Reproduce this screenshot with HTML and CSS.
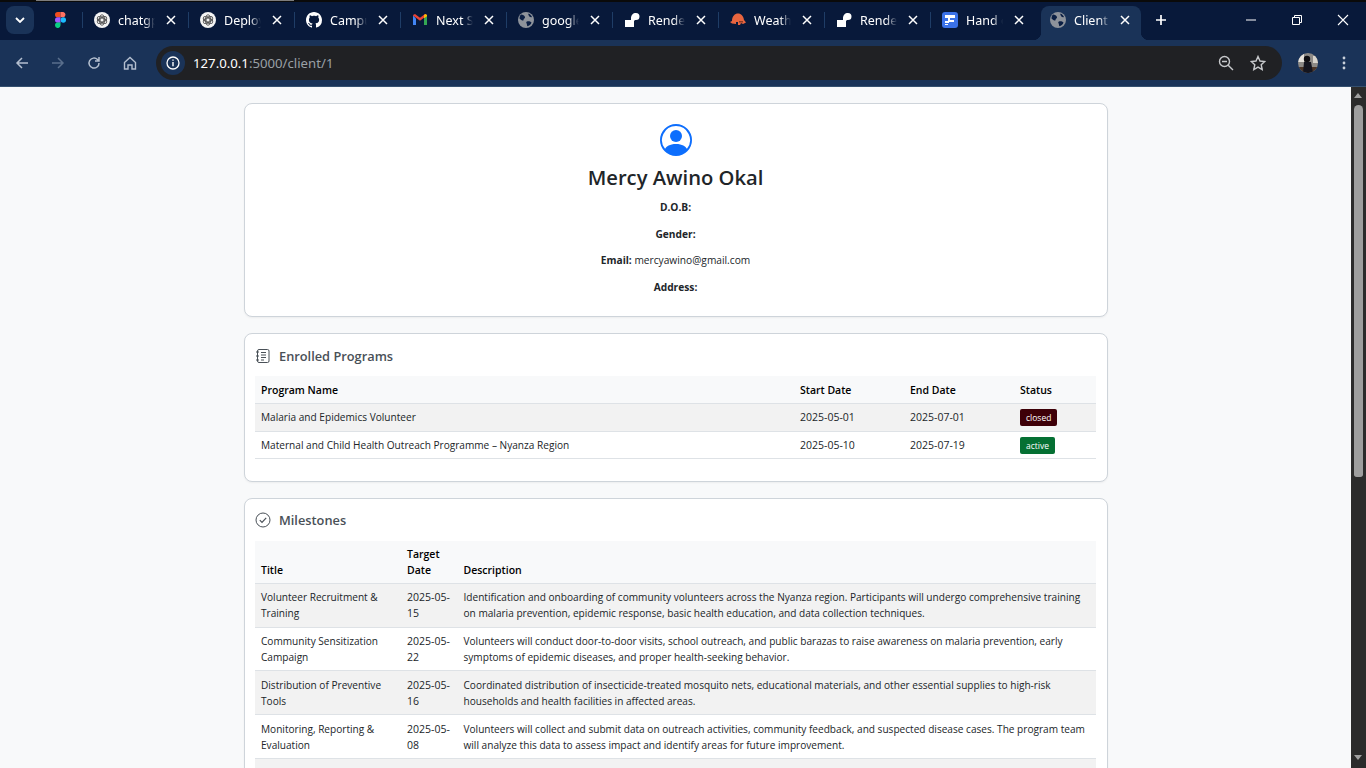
FILE: index.html
```html
<!DOCTYPE html>
<html lang="en">
<head>
    <meta charset="UTF-8">
    <meta name="viewport" content="width=device-width, initial-scale=1.0">
    <title>Client Profile</title>
    <link rel="stylesheet" href="styles.css">
</head>
<body>
    <svg class="sprites" width="0" height="0">
        <symbol id="i-close" viewBox="0 0 10 10"><path d="M1 1l8 8M9 1l-8 8" fill="none" stroke="currentColor" stroke-width="1.5"/></symbol>
        <symbol id="i-globe" viewBox="0 0 16 16"><circle cx="8" cy="8" r="8" fill="#8e939b"/><path d="M3 2.500c2 .3 3.500 1.200 4 2.500s-1.500 1.500-1.500 3S3 8 1.500 6.500C1.500 5 2 3.500 3 2.500zM9 9.500c1.500-.5 3.500 0 4.500 1-.6 2-2.500 3.500-4 3.800-.8-1-.3-2-1-3-.4-.7-.3-1.400.5-1.800zM10.500 1.500c1.500.5 3 2 3.500 3.500-1.500.5-2.500 0-3-1s-1-1.500-.5-2.500z" fill="#0b1f44"/></symbol>
        <symbol id="i-gpt" viewBox="0 0 16 16"><circle cx="8" cy="8" r="8" fill="#f4f4f4"/><g fill="none" stroke="#555" stroke-width=".9"><circle cx="8" cy="8" r="2"/><ellipse cx="8" cy="8" rx="5.200" ry="2.600" transform="rotate(30 8 8)"/><ellipse cx="8" cy="8" rx="5.200" ry="2.600" transform="rotate(90 8 8)"/><ellipse cx="8" cy="8" rx="5.200" ry="2.600" transform="rotate(150 8 8)"/></g></symbol>
        <symbol id="i-render" viewBox="0 0 16 16"><path d="M1 8h6V6.500C7 3 9 1 12 1a3.500 3.500 0 0 1 0 7c-1.500 0-2 .5-2 2v5H1z" fill="#fff"/></symbol>
    </svg>

    <div class="tabstrip">
        <div class="top-line"></div>
        <button class="tab-search">
            <svg width="10" height="6" viewBox="0 0 10 6"><path d="M1 1l4 4 4-4" fill="none" stroke="#fff" stroke-width="1.800"/></svg>
        </button>
        <div class="pinned">
            <svg width="11" height="16" viewBox="0 0 11 16">
                <path d="M0 2.700A2.700 2.700 0 0 1 2.700 0h2.800v5.300H2.700A2.700 2.700 0 0 1 0 2.700z" fill="#f24e1e"/>
                <path d="M5.500 0h2.800a2.700 2.700 0 0 1 0 5.300H5.500z" fill="#ff7262"/>
                <path d="M0 8a2.700 2.700 0 0 1 2.700-2.700h2.800v5.400H2.700A2.700 2.700 0 0 1 0 8z" fill="#a259ff"/>
                <circle cx="8.300" cy="8" r="2.700" fill="#1abcfe"/>
                <path d="M0 13.300a2.700 2.700 0 0 1 2.700-2.700h2.800v2.700a2.700 2.700 0 0 1-5.500 0z" fill="#0acf83"/>
            </svg>
        </div>
        <div class="tab">
            <svg class="favicon"><use href="#i-gpt"/></svg>
            <span class="tab-title">chatgpt</span>
            <svg class="tab-close"><use href="#i-close"/></svg>
        </div>
        <div class="tab">
            <svg class="favicon"><use href="#i-gpt"/></svg>
            <span class="tab-title">Deploy</span>
            <svg class="tab-close"><use href="#i-close"/></svg>
        </div>
        <div class="tab">
            <svg class="favicon" viewBox="0 0 16 16"><path fill="#fff" d="M8 0C3.580 0 0 3.580 0 8c0 3.540 2.290 6.530 5.470 7.590.4.070.55-.17.55-.38 0-.19-.01-.82-.01-1.490-2.010.37-2.530-.49-2.690-.94-.09-.23-.48-.94-.82-1.130-.28-.15-.68-.52-.01-.53.63-.01 1.080.58 1.230.82.720 1.210 1.870.870 2.330.660.070-.520.280-.870.510-1.070-1.780-.2-3.640-.890-3.640-3.950 0-.870.310-1.590.820-2.150-.080-.2-.360-1.020.080-2.120 0 0 .670-.210 2.200.820.640-.180 1.320-.270 2-.270s1.360.090 2 .270c1.530-1.040 2.200-.820 2.200-.820.440 1.100.160 1.920.080 2.120.510.560.820 1.270.820 2.150 0 3.070-1.870 3.750-3.650 3.950.290.250.540.730.540 1.480 0 1.070-.010 1.930-.010 2.200 0 .210.150.460.550.380A8.010 8.010 0 0 0 16 8c0-4.420-3.580-8-8-8z"/></svg>
            <span class="tab-title">Campus</span>
            <svg class="tab-close"><use href="#i-close"/></svg>
        </div>
        <div class="tab">
            <svg class="favicon" viewBox="0 0 16 16">
                <path d="M1 3.500v9.500h3V6.500z" fill="#4285f4"/>
                <path d="M15 3.500v9.500h-3V6.500z" fill="#34a853"/>
                <path d="M1 3.500L8 8.800l7-5.300V3L13 2 8 5.800 3 2 1 3z" fill="#ea4335"/>
                <path d="M12 3v3.500l3-2.300V3l-1.500-1z" fill="#fbbc04"/>
            </svg>
            <span class="tab-title">Next Step</span>
            <svg class="tab-close"><use href="#i-close"/></svg>
        </div>
        <div class="tab">
            <svg class="favicon"><use href="#i-globe"/></svg>
            <span class="tab-title">google</span>
            <svg class="tab-close"><use href="#i-close"/></svg>
        </div>
        <div class="tab">
            <svg class="favicon"><use href="#i-render"/></svg>
            <span class="tab-title">Render</span>
            <svg class="tab-close"><use href="#i-close"/></svg>
        </div>
        <div class="tab">
            <svg class="favicon" viewBox="0 0 16 16"><path d="M2 9C2 4 5 1.500 8 1.500S13.500 4 14 8l2 2.500-3 1.500-2-1-1 2H8V10H6v2L2 11.500 0 10z" fill="#e8653f"/><path d="M9 9h4v1.500H9z" fill="#8a3a25"/></svg>
            <span class="tab-title">Weather</span>
            <svg class="tab-close"><use href="#i-close"/></svg>
        </div>
        <div class="tab">
            <svg class="favicon"><use href="#i-render"/></svg>
            <span class="tab-title">Render</span>
            <svg class="tab-close"><use href="#i-close"/></svg>
        </div>
        <div class="tab">
            <svg class="favicon" viewBox="0 0 16 16"><rect width="16" height="16" rx="3" fill="#3b72e8"/><path d="M3 3h10v3H8v2h4v2H7v1H3V9h3V6H3z" fill="#fff"/><path d="M3 12h3v1H3z" fill="#fff"/></svg>
            <span class="tab-title">Hand of</span>
            <svg class="tab-close"><use href="#i-close"/></svg>
        </div>
        <div class="tab tab-active">
            <svg class="favicon"><use href="#i-globe"/></svg>
            <span class="tab-title">Client Profile</span>
            <svg class="tab-close"><use href="#i-close"/></svg>
        </div>
        <button class="new-tab">
            <svg width="12" height="12" viewBox="0 0 12 12"><path d="M6 1v10M1 6h10" stroke="#fff" stroke-width="1.700"/></svg>
        </button>
        <div class="window-controls">
            <svg width="12" height="12" viewBox="0 0 12 12"><path d="M1 6h10" stroke="#fff"/></svg>
            <svg width="12" height="12" viewBox="0 0 12 12"><path d="M1.500 3.500h7v7h-7zM3.500 3.500v-2h7v7h-2" fill="none" stroke="#fff"/></svg>
            <svg width="12" height="12" viewBox="0 0 12 12"><path d="M1 1l10 10M11 1L1 11" stroke="#fff" stroke-width="1.100"/></svg>
        </div>
    </div>

    <div class="toolbar">
        <svg class="tool" viewBox="0 0 16 16"><path d="M14 8H3M8 3L3 8l5 5" fill="none" stroke="#b4bfcf" stroke-width="1.500"/></svg>
        <svg class="tool" viewBox="0 0 16 16"><path d="M2 8h11M8 3l5 5-5 5" fill="none" stroke="#5a6f8c" stroke-width="1.500"/></svg>
        <svg class="tool" viewBox="0 0 16 16"><path d="M13 8a5 5 0 1 1-1.500-3.500L13 6M13 2v4H9" fill="none" stroke="#b4bfcf" stroke-width="1.500"/></svg>
        <svg class="tool" viewBox="0 0 16 16"><path d="M2.500 7.500L8 2.500l5.500 5V14H10v-4H6v4H2.500z" fill="none" stroke="#b4bfcf" stroke-width="1.400"/></svg>
        <div class="omnibox">
            <span class="site-info">
                <svg width="14" height="14" viewBox="0 0 14 14"><circle cx="7" cy="7" r="6" fill="none" stroke="#fff" stroke-width="1.300"/><path d="M7 6v4.200M7 3.500v1.300" stroke="#fff" stroke-width="1.400"/></svg>
            </span>
            <span class="url"><span class="url-host">127.0.0.1</span>:5000/client/1</span>
            <svg class="omni-zoom" width="16" height="16" viewBox="0 0 16 16"><circle cx="6.500" cy="6.500" r="5" fill="none" stroke="#c7c9cc" stroke-width="1.400"/><path d="M4 6.500h5M10.200 10.200L15 15" stroke="#c7c9cc" stroke-width="1.400"/></svg>
            <svg class="omni-star" width="16" height="16" viewBox="0 0 16 16"><path d="M8 1.500l2 4.500 4.800.5-3.600 3.200 1 4.800L8 12.100l-4.200 2.400 1-4.800L1.200 6.500 6 6z" fill="none" stroke="#c7c9cc" stroke-width="1.400"/></svg>
        </div>
        <svg class="avatar" width="20" height="20" viewBox="0 0 20 20">
            <defs><clipPath id="avatarClip"><circle cx="10" cy="10" r="10"/></clipPath></defs>
            <g clip-path="url(#avatarClip)">
                <rect width="20" height="20" fill="#8d8a86"/>
                <rect y="14" width="20" height="6" fill="#4a3527"/>
                <rect width="6" height="9" fill="#e6e3dd"/>
                <rect x="15" y="3" width="5" height="7" fill="#d8d4cc"/>
                <circle cx="9" cy="6" r="3.200" fill="#0f0e12"/>
                <path d="M5 20l1-11h7l2 11z" fill="#14151f"/>
            </g>
        </svg>
        <svg class="menu-dots" width="4" height="14" viewBox="0 0 4 14"><circle cx="2" cy="2" r="1.400" fill="#c9d0da"/><circle cx="2" cy="7" r="1.400" fill="#c9d0da"/><circle cx="2" cy="12" r="1.400" fill="#c9d0da"/></svg>
    </div>

    <div class="viewport">
        <main class="content">
            <section class="card profile">
                <svg class="profile-icon" width="32" height="32" viewBox="0 0 16 16" fill="#0d6efd">
                    <path d="M11 6a3 3 0 1 1-6 0 3 3 0 0 1 6 0z"/>
                    <path fill-rule="evenodd" d="M0 8a8 8 0 1 1 16 0A8 8 0 0 1 0 8zm8-7a7 7 0 0 0-5.468 11.370C3.242 11.226 4.805 10 8 10s4.757 1.225 5.468 2.370A7 7 0 0 0 8 1z"/>
                </svg>
                <h1>Mercy Awino Okal</h1>
                <p><strong>D.O.B:</strong></p>
                <p><strong>Gender:</strong></p>
                <p><strong>Email:</strong> mercyawino@gmail.com</p>
                <p><strong>Address:</strong></p>
            </section>

            <section class="card">
                <h2>
                    <svg width="16" height="16" viewBox="0 0 16 16" fill="none" stroke="#495057">
                        <rect x="2.500" y="1.500" width="11.500" height="13" rx="1.500"/>
                        <path d="M6 4.500h5M6 7h5M6 9.500h5M6 12h3M1 4h3M1 8h3M1 12h3"/>
                    </svg>
                    Enrolled Programs
                </h2>
                <table class="programs">
                    <colgroup>
                        <col class="col-name"><col class="col-start"><col class="col-end"><col>
                    </colgroup>
                    <thead>
                        <tr><th>Program Name</th><th>Start Date</th><th>End Date</th><th>Status</th></tr>
                    </thead>
                    <tbody>
                        <tr>
                            <td>Malaria and Epidemics Volunteer</td>
                            <td class="date">2025-05-01</td>
                            <td class="date">2025-07-01</td>
                            <td><span class="badge badge-closed">closed</span></td>
                        </tr>
                        <tr>
                            <td>Maternal and Child Health Outreach Programme – Nyanza Region</td>
                            <td class="date">2025-05-10</td>
                            <td class="date">2025-07-19</td>
                            <td><span class="badge badge-active">active</span></td>
                        </tr>
                    </tbody>
                </table>
            </section>

            <section class="card card-milestones">
                <h2>
                    <svg width="16" height="16" viewBox="0 0 16 16" fill="none" stroke="#495057">
                        <circle cx="8" cy="8" r="7"/>
                        <path d="M4.800 8.200l2.200 2.200 4.200-4.600" stroke-width="1.200"/>
                    </svg>
                    Milestones
                </h2>
                <table class="milestones">
                    <colgroup>
                        <col class="col-title"><col class="col-target"><col>
                    </colgroup>
                    <thead>
                        <tr><th>Title</th><th>Target Date</th><th>Description</th></tr>
                    </thead>
                    <tbody>
                        <tr>
                            <td>Volunteer Recruitment &amp; Training</td>
                            <td class="date">2025-05-15</td>
                            <td>Identification and onboarding of community volunteers across the Nyanza region. Participants will undergo comprehensive training on malaria prevention, epidemic response, basic health education, and data collection techniques.</td>
                        </tr>
                        <tr>
                            <td>Community Sensitization Campaign</td>
                            <td class="date">2025-05-22</td>
                            <td>Volunteers will conduct door-to-door visits, school outreach, and public barazas to raise awareness on malaria prevention, early symptoms of epidemic diseases, and proper health-seeking behavior.</td>
                        </tr>
                        <tr>
                            <td>Distribution of Preventive Tools</td>
                            <td class="date">2025-05-16</td>
                            <td>Coordinated distribution of insecticide-treated mosquito nets, educational materials, and other essential supplies to high-risk households and health facilities in affected areas.</td>
                        </tr>
                        <tr>
                            <td>Monitoring, Reporting &amp; Evaluation</td>
                            <td class="date">2025-05-08</td>
                            <td>Volunteers will collect and submit data on outreach activities, community feedback, and suspected disease cases. The program team will analyze this data to assess impact and identify areas for future improvement.</td>
                        </tr>
                        <tr>
                            <td>&nbsp;</td><td></td><td></td>
                        </tr>
                    </tbody>
                </table>
            </section>
        </main>

        <div class="scrollbar">
            <span class="arrow-up"></span>
            <span class="thumb"></span>
            <span class="arrow-down"></span>
        </div>
    </div>
</body>
</html>
```

FILE: styles.css
```css
/* General page styling */
* {
    box-sizing: border-box;
}

html, body {
    height: 100%;
}

body {
    margin: 0;
    display: flex;
    flex-direction: column;
    overflow: hidden;
    font-family: "Open Sans", "Noto Sans", sans-serif;
    background-color: #f8f9fa;
    color: #212529;
}

.sprites {
    position: absolute;
}

/* Browser tabs */
.tabstrip {
    position: relative;
    display: flex;
    align-items: flex-end;
    height: 40px;
    flex-shrink: 0;
    padding-left: 6px;
    background-color: #08193a;
    border-top: 2px solid #0a0a0a;
}

.top-line {
    position: absolute;
    top: -2px;
    left: 36px;
    width: 258px;
    height: 1px;
    background-color: #7d7d7d;
}

.tab-search {
    display: flex;
    align-items: center;
    justify-content: center;
    align-self: flex-start;
    width: 28px;
    height: 28px;
    margin: 4px 0 0;
    padding: 0;
    border: none;
    border-radius: 8px;
    background-color: #1a3358;
}

.pinned {
    display: flex;
    align-items: center;
    justify-content: center;
    position: relative;
    width: 49px;
    height: 38px;
    padding: 0 0 2px 3px;
}

.pinned::after, .tab::after {
    content: "";
    position: absolute;
    top: 10px;
    right: 0;
    width: 1px;
    height: 16px;
    background-color: #1f3d66;
}

.tab {
    position: relative;
    display: flex;
    align-items: center;
    width: 106px;
    height: 38px;
    padding: 0 11px 2px 11px;
    color: #fff;
    font-size: 12.500px;
    font-family: "Noto Sans", sans-serif;
}

.tab:nth-last-child(4)::after {
    display: none;
}

.favicon {
    width: 16px;
    height: 16px;
    flex-shrink: 0;
}

.tab-title {
    width: 37px;
    margin-left: 8px;
    overflow: hidden;
    white-space: nowrap;
    -webkit-mask-image: linear-gradient(to right, #000 70%, transparent);
    mask-image: linear-gradient(to right, #000 70%, transparent);
}

.tab-close {
    width: 10px;
    height: 10px;
    margin-left: 11px;
    color: #fff;
    flex-shrink: 0;
}

.tab-active {
    width: 100px;
    height: 34px;
    margin-left: 4px;
    padding-left: 9px;
    padding-bottom: 6px;
    border-radius: 8px 8px 0 0;
    background-color: #1a3358;
}

.tab-active .tab-title {
    width: 36px;
}

.tab-active .tab-close {
    margin-left: 10px;
}

/* little curves at the bottom corners of the active tab */
.tab-active::before, .tab-active::after {
    content: "";
    position: absolute;
    top: auto;
    bottom: 0;
    width: 8px;
    height: 8px;
    background-color: transparent;
}

.tab-active::before {
    left: -8px;
    background-image: radial-gradient(circle at 0 0, transparent 8px, #1a3358 8.500px);
}

.tab-active::after {
    right: -8px;
    background-image: radial-gradient(circle at 100% 0, transparent 8px, #1a3358 8.500px);
}

.new-tab {
    display: flex;
    align-items: center;
    justify-content: center;
    align-self: flex-start;
    width: 28px;
    height: 28px;
    margin: 4px 0 0 6px;
    padding: 0;
    border: none;
    background: none;
}

.window-controls {
    position: absolute;
    top: 12px;
    right: 0;
    display: flex;
}

.window-controls svg {
    display: block;
    width: 46px;
    padding: 0 17px;
    box-sizing: border-box;
}

/* Browser toolbar */
.toolbar {
    display: flex;
    align-items: center;
    height: 47px;
    flex-shrink: 0;
    padding: 0 14px 0 14px;
    background-color: #1a3358;
    border-bottom: 1px solid #35506f;
}

.tool {
    width: 16px;
    height: 16px;
    margin-right: 20px;
    flex-shrink: 0;
}

.omnibox {
    display: flex;
    align-items: center;
    flex: 1;
    height: 34px;
    margin-left: -2px;
    padding: 0 16px 0 5px;
    border-radius: 17px;
    background-color: #202124;
}

.site-info {
    display: flex;
    align-items: center;
    justify-content: center;
    width: 24px;
    height: 24px;
    border-radius: 50%;
    background-color: #1a3358;
}

.url {
    flex: 1;
    margin-left: 8px;
    font-size: 13.200px;
    font-family: "Noto Sans", sans-serif;
    color: #9aa0a6;
}

.url-host {
    color: #fff;
}

.omni-star {
    margin-left: 16px;
}

.avatar {
    margin-left: 16px;
    flex-shrink: 0;
}

.menu-dots {
    margin-left: 24px;
    margin-right: 6px;
    flex-shrink: 0;
}

/* Page area */
.viewport {
    position: relative;
    display: flex;
    flex: 1;
    min-height: 0;
}

.content {
    flex: 1;
    min-width: 0;
    overflow: hidden;
    padding: 16px 243px 0 244px;
}

.card {
    margin-bottom: 16px;
    padding: 10px 11px 10px 10px;
    background-color: #fff;
    border: 1px solid #ced4da;
    border-radius: 8px;
    box-shadow: 0 1px 2px rgba(0,0,0,0.05);
}

.profile {
    height: 214px;
    padding-top: 20px;
    text-align: center;
}

.profile-icon {
    display: block;
    margin: 0 auto 9px;
}

.profile h1 {
    margin: 0 0 10px;
    font-size: 20.200px;
    line-height: 24px;
    font-weight: 600;
}

.profile p {
    margin: 0 0 10.500px;
    font-size: 10.200px;
    line-height: 16px;
}

.card h2 {
    display: flex;
    align-items: center;
    gap: 8px;
    margin: 0 0 8px;
    height: 24px;
    font-size: 12.800px;
    font-weight: 600;
    color: #495057;
}

.card-milestones h2 {
    height: 22px;
    margin-bottom: 10px;
}

/* Tables */
table {
    width: 100%;
    border-collapse: collapse;
    table-layout: fixed;
    margin-bottom: 12px;
    font-size: 10.100px;
    line-height: 16px;
}

th {
    padding: 5.375px 6px;
    text-align: left;
    vertical-align: bottom;
    font-size: 10.500px;
    color: #000;
    font-weight: 600;
    background-color: #f8f9fa;
    border-bottom: 1px solid #dee2e6;
}

.programs th {
    padding: 6px 6px 4.750px;
}

.milestones th {
    padding: 4.400px 6px 5.350px;
}

td {
    padding: 5.375px 6px;
    vertical-align: top;
    border-bottom: 1px solid #dee2e6;
}

td.date {
    font-size: 10.500px;
}

tbody tr:nth-child(odd) td {
    background-color: #f2f2f2;
}

.col-name { width: 539px; }
.col-start { width: 110px; }
.col-end { width: 110px; }
.col-title { width: 146px; }
.col-target { width: 56.500px; }

.badge {
    display: inline-block;
    margin: -3px 0 -1px;
    padding: 0 6px;
    border-radius: 2px;
    font-size: 8.500px;
    line-height: 17px;
    color: #fff;
    vertical-align: middle;
}

.badge-closed {
    background-color: #3e0008;
}

.badge-active {
    background-color: #057033;
}

/* Fake scrollbar */
.scrollbar {
    position: relative;
    width: 15px;
    flex-shrink: 0;
    background-color: #2b2b2b;
}

.arrow-up, .arrow-down {
    position: absolute;
    left: 3px;
    width: 0;
    height: 0;
    border-left: 4.500px solid transparent;
    border-right: 4.500px solid transparent;
}

.arrow-up {
    top: 6px;
    border-bottom: 5px solid #a0a0a0;
}

.arrow-down {
    bottom: 8px;
    border-top: 5px solid #a0a0a0;
}

.thumb {
    position: absolute;
    top: 18px;
    left: 3px;
    width: 9px;
    height: 372px;
    border-radius: 5px 5px 3px 3px;
    background-color: #9e9e9e;
}
```
